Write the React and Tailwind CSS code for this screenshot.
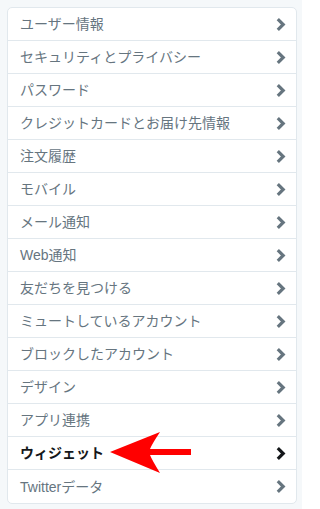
const ITEMS = [
  "ユーザー情報",
  "セキュリティとプライバシー",
  "パスワード",
  "クレジットカードとお届け先情報",
  "注文履歴",
  "モバイル",
  "メール通知",
  "Web通知",
  "友だちを見つける",
  "ミュートしているアカウント",
  "ブロックしたアカウント",
  "デザイン",
  "アプリ連携",
  "ウィジェット",
  "Twitterデータ",
];

const ACTIVE = "ウィジェット";

function Chevron({ active }) {
  return (
    <svg width="10" height="13" viewBox="0 0 10 13" className={active ? "text-[#14171a]" : "text-[#66757f]"}>
      <path d="M1.8 1.2 L7.2 6.5 L1.8 11.8" fill="none" stroke="currentColor" strokeWidth="3.2" />
    </svg>
  );
}

function RedArrow() {
  return (
    <svg width="84" height="44" viewBox="0 0 84 44" className="absolute left-[100px] top-[-7px] pointer-events-none">
      <path
        d="M2 22 L52 2 Q44 14 42 19 L83 19 L83 25 L42 25 Q44 30 52 43 Z"
        fill="#ff0000"
      />
    </svg>
  );
}

export default function App() {
  return (
    <div className="w-[302px] h-[509px] bg-[#f5f8fa] pt-[7px] pl-[7px]" style={{ fontFamily: '"Liberation Sans", "Noto Sans CJK JP", sans-serif' }}>
      <div className="w-[290px] bg-white border border-[#e1e8ed] rounded-[5px]">
        {ITEMS.map((label, i) => {
          const active = label === ACTIVE;
          return (
            <div
              key={label}
              className={`relative h-[33px] flex items-center justify-between pl-[12px] pr-[10px] ${i < ITEMS.length - 1 ? "border-b border-[#e1e8ed]" : ""}`}
            >
              <span className={`text-[14px] leading-none ${active ? "font-bold text-[#14171a]" : "text-[#66757f]"}`}>
                {label}
              </span>
              <Chevron active={active} />
              {active && <RedArrow />}
            </div>
          );
        })}
      </div>
    </div>
  );
}
